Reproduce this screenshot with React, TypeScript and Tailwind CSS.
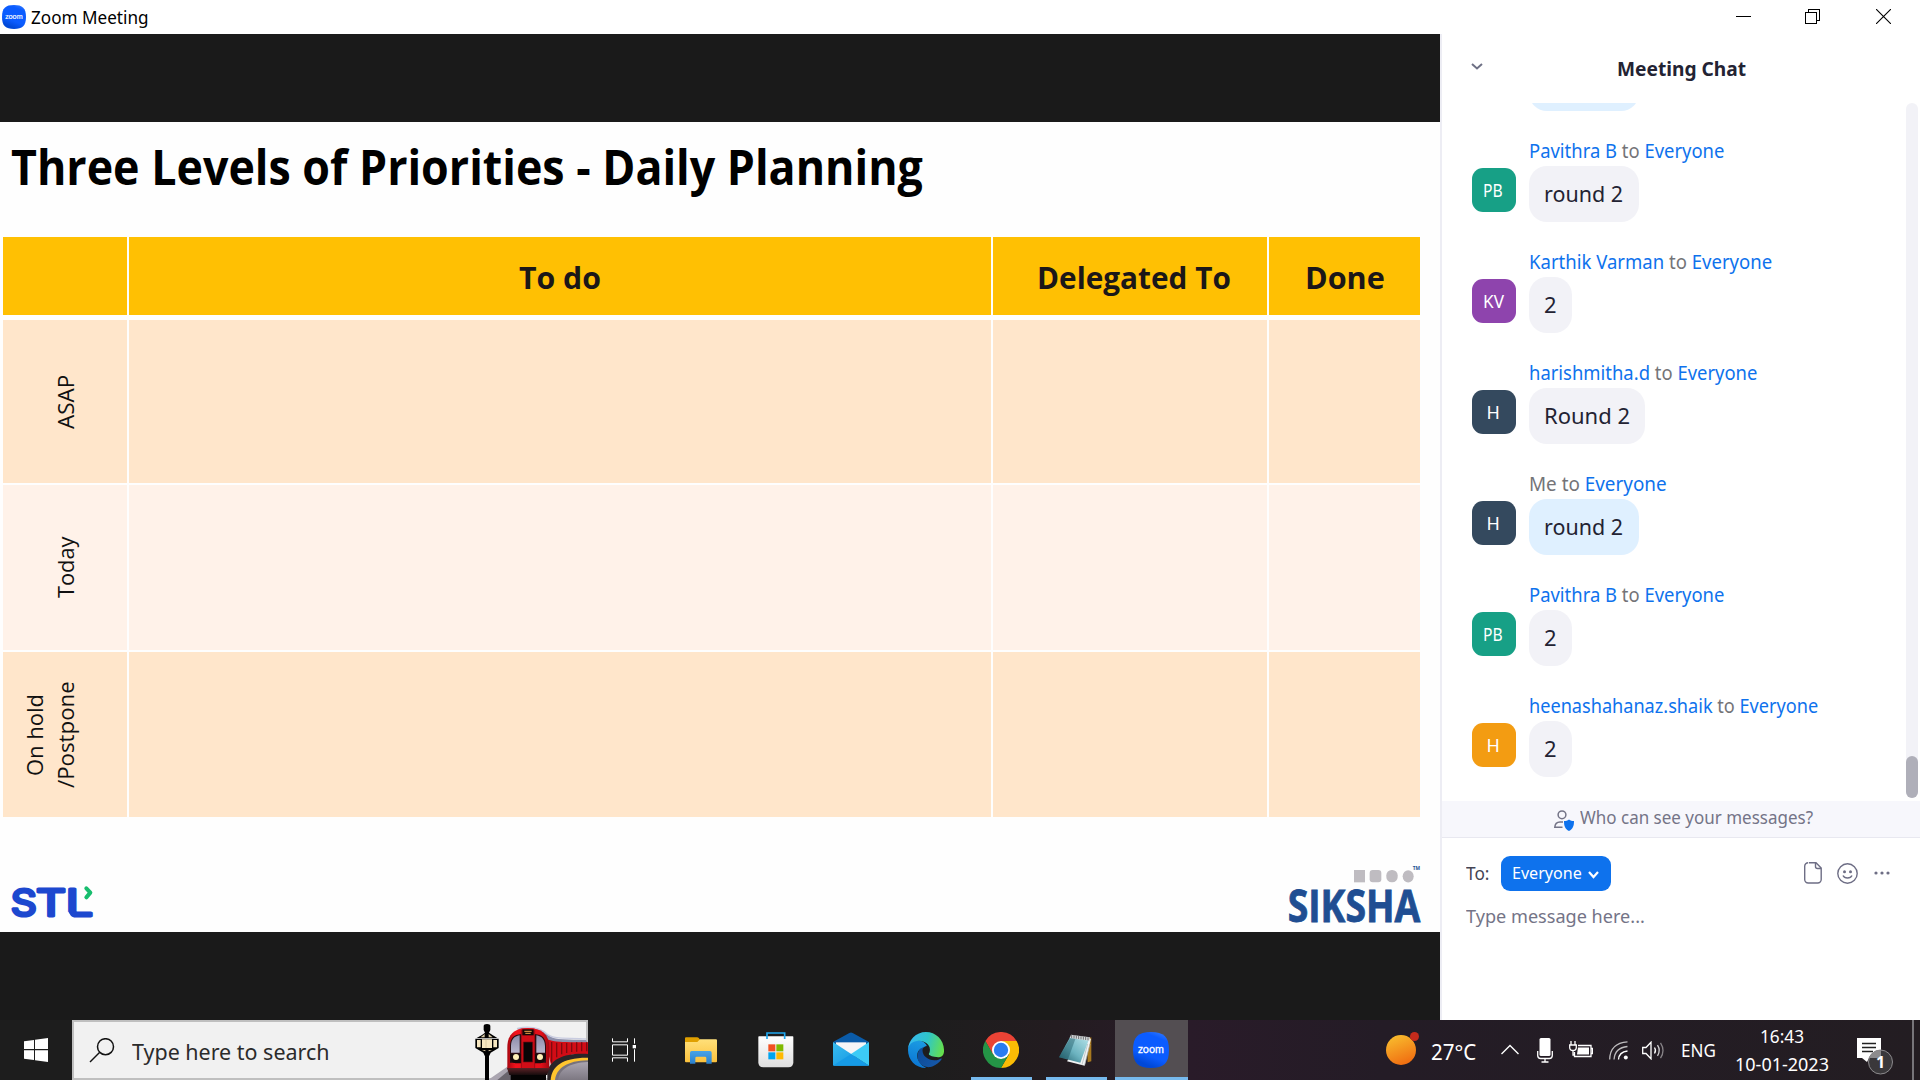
import React, { useLayoutEffect, useRef, useState } from "react";

/* Text stretched or squeezed to fill the width (or height) of its box. */
function Fit({ className = "", vertical = false, children }: { className?: string; vertical?: boolean; children: React.ReactNode }) {
  const outer = useRef<HTMLSpanElement>(null);
  const inner = useRef<HTMLSpanElement>(null);
  const [scale, setScale] = useState(1);
  useLayoutEffect(() => {
    const o = outer.current;
    const i = inner.current;
    if (!o || !i) return;
    setScale(vertical ? o.clientHeight / i.offsetHeight : o.clientWidth / i.offsetWidth);
  }, [vertical]);
  return (
    <span ref={outer} className={`block shrink-0 whitespace-nowrap ${vertical ? "rotate-180 [writing-mode:vertical-rl]" : ""} ${className}`}>
      <span
        ref={inner}
        className="inline-block origin-top-left"
        style={{ transform: vertical ? `scaleY(${scale})` : `scaleX(${scale})` }}
      >
        {children}
      </span>
    </span>
  );
}

const UI = "font-['Noto_Sans','Open_Sans',sans-serif]";
const SLIDE = "font-['Open_Sans','Noto_Sans',sans-serif]";

function ZoomLogo({ className }: { className: string }) {
  return (
    <svg viewBox="0 0 108 108" className={className}>
      <defs>
        <linearGradient id="zoomBlue" x1="1" y1="0" x2="0.6" y2="1">
          <stop offset="0" stopColor="#3f83ff" />
          <stop offset="0.25" stopColor="#0b5cff" />
          <stop offset="0.75" stopColor="#0b5cff" />
          <stop offset="1" stopColor="#0048d8" />
        </linearGradient>
      </defs>
      <path d="M54 0C92 0 108 14 108 54S92 108 54 108 0 94 0 54 16 0 54 0Z" fill="url(#zoomBlue)" />
      <text x="15" y="63" fontSize="36" fontFamily="Lato, sans-serif" fontWeight="400" stroke="#fff" strokeWidth=".8" fill="#fff" textLength="78" lengthAdjust="spacingAndGlyphs">zoom</text>
    </svg>
  );
}

function TitleBar() {
  return (
    <header className="flex h-[34px] items-center bg-white pl-0.5">
      <ZoomLogo className="size-6" />
      <Fit className="ml-[5px] w-[118px] text-[18px] leading-[34px] text-black">Zoom Meeting</Fit>
      <div className="ml-auto flex items-center pr-[29px] pb-[2px]">
        <svg className="h-4 w-[15px]" viewBox="0 0 15 16" shapeRendering="crispEdges"><path d="M0 8.500H15" stroke="#000" /></svg>
        <svg className="ml-[54px] size-[15px]" viewBox="0 0 15 15" fill="none" stroke="#000" shapeRendering="crispEdges">
          <path d="M.5 3.500h11v11h-11zM3.500 3.500V.5h11v11h-3" />
        </svg>
        <svg className="ml-[56px] size-[15px]" viewBox="0 0 15 15" stroke="#000" strokeWidth="1.1"><path d="M0 0 15 15M15 0 0 15" /></svg>
      </div>
    </header>
  );
}

const rows = [
  { label: ["ASAP"], heights: ["h-[54px]"], bg: "bg-[#ffe6cb]" },
  { label: ["Today"], heights: ["h-[61px]"], bg: "bg-[#fff2e9]" },
  { label: ["On hold", "/Postpone"], heights: ["h-[82px]", "h-[107px]"], bg: "bg-[#ffe6cb]" },
];

function PriorityTable() {
  return (
    <div className="ml-[3px] grid w-[1417px] grid-cols-[124px_862px_274px_151px] grid-rows-[79px_165px_165px_165px] gap-x-[2px] gap-y-[2px] text-[22.500px] text-[#111]">
      {["", "To do", "Delegated To", "Done"].map((h, i) => (
        <div key={i} className={`mb-px flex items-center justify-center bg-[#ffc003] pt-0.5 text-[31px] leading-none font-bold text-[#1b1718] ${i === 2 ? "pl-[7px]" : ""}`}>
          {h && <Fit className={["", "w-[82px]", "w-[194px]", "w-[80px]"][i]}>{h}</Fit>}
        </div>
      ))}
      {rows.map((r, n) => (
        <React.Fragment key={n}>
          <div className={`${r.bg} ${n === 0 ? "mt-[2px]" : ""} flex items-center justify-end pr-[46px]`}>
            {r.label.map((l, i) => (
              <Fit key={l} vertical className={`w-[31px] leading-[31px] ${r.heights[i]}`}>{l}</Fit>
            ))}
          </div>
          {[0, 1, 2].map((c) => (
            <div key={c} className={`${r.bg} ${n === 0 ? "mt-[2px]" : ""}`} />
          ))}
        </React.Fragment>
      ))}
    </div>
  );
}

function SlideLogos() {
  return (
    <div className="mt-auto flex h-[78px] items-start justify-between pr-[15px] pl-[9px]">
      <svg className="mt-[28px] h-[42px] w-[87px] overflow-visible" viewBox="27 100 261 126">
        <g fontFamily="Inter, sans-serif" fontWeight="400" fontSize="111" fill="#1d48cf" stroke="#1d48cf" strokeWidth="9" strokeLinejoin="round">
          <text x="32" y="203" textLength="78" lengthAdjust="spacingAndGlyphs">S</text>
          <text x="108" y="203" textLength="90" lengthAdjust="spacingAndGlyphs">T</text>
          <text x="197" y="203" textLength="82" lengthAdjust="spacingAndGlyphs">L</text>
        </g>
        <path d="M259 119 271 132 259 146" fill="none" stroke="#18bd6e" strokeWidth="12" strokeLinecap="round" strokeLinejoin="round" />
        <path d="M203 190V210H222Q209 204 203 190Z" fill="#fefefe" stroke="#fefefe" strokeWidth="4" />
        <path d="M219 176Q223 190 239 193H222Z" fill="#1d48cf" />
      </svg>
      <svg className="mt-[7px] h-[66px] w-[140px] overflow-visible" viewBox="136 37 420 198">
        <g fill="#bfbcc1">
          <rect x="343" y="64" width="33" height="37" />
          <rect x="390" y="64" width="35" height="37" rx="9" />
          <rect x="440" y="64" width="34" height="37" rx="16" />
          <ellipse cx="505.500" cy="83" rx="16.500" ry="18.500" />
        </g>
        <text x="519" y="65" fontSize="16" fontFamily="Open Sans, sans-serif" fontWeight="700" fill="#244f91" textLength="22" lengthAdjust="spacingAndGlyphs">TM</text>
        <text x="144" y="219" fontSize="132" fontFamily="Open Sans, sans-serif" fontWeight="700" fill="#204e92" stroke="#204e92" strokeWidth="2.500" textLength="398" lengthAdjust="spacingAndGlyphs">SIKSHA</text>
      </svg>
    </div>
  );
}

function SharedScreen() {
  return (
    <main className="flex w-[1440px] flex-col bg-[#1a1a1a] pt-[88px] pb-[88px]">
      <section className={`flex h-[810px] flex-col bg-[#fefefe] ${SLIDE}`}>
        <h1 className="flex h-[115px] pl-[11px] text-[48px] leading-[90px] font-bold text-black">
          <Fit className="w-[912px]">Three Levels of Priorities - Daily Planning</Fit>
        </h1>
        <PriorityTable />
        <SlideLogos />
      </section>
    </main>
  );
}

type Message = { from: string; w: string; initials: string; iw: string; avatar: string; text: string; tw: string; bw: string; mine?: boolean };
const messages: Message[] = [
  { from: "Pavithra B", w: "w-[195px]", initials: "PB", iw: "w-[20px]", avatar: "bg-[#17a086]", text: "round 2", tw: "w-[79px]", bw: "w-[110px]" },
  { from: "Karthik Varman", w: "w-[243px]", initials: "KV", iw: "w-[21px]", avatar: "bg-[#8e44ad]", text: "2", tw: "w-[13px]", bw: "w-[43px]" },
  { from: "harishmitha.d", w: "w-[228px]", initials: "H", iw: "w-[13px]", avatar: "bg-[#34495e]", text: "Round 2", tw: "w-[86px]", bw: "w-[116px]" },
  { from: "Me", w: "w-[138px]", initials: "H", iw: "w-[13px]", avatar: "bg-[#34495e]", text: "round 2", tw: "w-[79px]", bw: "w-[110px]", mine: true },
  { from: "Pavithra B", w: "w-[195px]", initials: "PB", iw: "w-[20px]", avatar: "bg-[#17a086]", text: "2", tw: "w-[13px]", bw: "w-[43px]" },
  { from: "heenashahanaz.shaik", w: "w-[289px]", initials: "H", iw: "w-[13px]", avatar: "bg-[#f39c12]", text: "2", tw: "w-[13px]", bw: "w-[43px]" },
];

function ChatMessage({ m }: { m: Message }) {
  return (
    <li className="flex h-[111px]">
      <div className={`mt-[31.500px] flex size-[44px] items-center justify-center rounded-[11px] pr-[2px] text-[18px] leading-none text-white ${m.avatar}`}>
        <Fit className={m.iw}>{m.initials}</Fit>
      </div>
      <div className="ml-[13px]">
        <div className="h-[30px] text-[19px] leading-[30px] text-[#747478]">
          <Fit className={m.w}>
            <span className={m.mine ? "" : "text-[#0e72ed]"}>{m.from}</span> to <span className="text-[#0e72ed]">Everyone</span>
          </Fit>
        </div>
        <div className={`flex h-[56px] items-center rounded-[18px] pb-[2px] pl-[15px] text-[22px] leading-none text-[#232333] ${m.bw} ${m.mine ? "bg-[#dff0ff]" : "bg-[#f2f2f7]"}`}>
          <Fit className={m.tw}>{m.text}</Fit>
        </div>
      </div>
    </li>
  );
}

function ChatPanel() {
  return (
    <aside className="flex flex-1 flex-col border-l-2 border-[#ededf4] bg-white">
      <div className="flex h-[69px] items-center pl-[29px]">
        <svg className="-mt-[3px] h-[8px] w-[12px]" viewBox="0 0 12 8" fill="none" stroke="#6e7085" strokeWidth="2"><path d="M1 1 6 5.500 11 1" /></svg>
        <Fit className="mt-[2px] ml-[134px] w-[129px] text-[19px] leading-none font-bold text-[#232333]">Meeting Chat</Fit>
      </div>
      <div className="flex h-[698px] pr-[2px] pb-[3px]">
        <div className="flex-1 overflow-hidden pl-[30px]">
          <div className="mb-[25px] ml-[57px] h-[8px] w-[110px] overflow-hidden">
            <div className="-mt-[48px] h-[56px] rounded-[18px] bg-[#dff0ff]" />
          </div>
          <ul>{messages.map((m, i) => <ChatMessage key={i} m={m} />)}</ul>
        </div>
        <div className="flex w-[12px] items-end rounded-full bg-[#f2f2f7]"><div className="h-[42px] w-full rounded-full bg-[#afafb9]" /></div>
      </div>
      <div className="flex h-[37px] items-center border-b border-[#e8e8f0] bg-[#f7f7fc] pl-[112px]">
        <svg className="mt-[2px] size-[21px]" viewBox="0 0 21 21" fill="none" stroke="#747487" strokeWidth="1.500">
          <circle cx="8" cy="4.800" r="3.900" />
          <path d="M9 12H6C3 12 1 14 .8 17.300H8.500" />
          <path d="M15 9.500c1.500 1.200 3 1.600 5 1.600 0 5-1 8-5 9.900-4-1.900-5-4.900-5-9.900 2 0 3.500-.4 5-1.600Z" fill="#0e72ed" stroke="none" />
        </svg>
        <Fit className="mb-[2px] ml-[5px] w-[233px] text-[17.500px] leading-none text-[#747487]">Who can see your messages?</Fit>
      </div>
      <div className="mt-[17px] flex h-[36px] items-center pl-[24px]">
        <Fit className="w-[23px] text-[18px] leading-none text-[#444453]">To:</Fit>
        <button className="ml-[12px] flex h-[35px] w-[110px] items-center rounded-[9px] bg-[#0e72ed] pl-[11px] text-white">
          <Fit className="-mt-px w-[70px] text-[17px] leading-none">Everyone</Fit>
          <svg className="mt-[4px] ml-[6px] h-[8px] w-[11px]" viewBox="0 0 11 8" fill="none" stroke="#fff" strokeWidth="2.200"><path d="M1 1 5.500 6 10 1" /></svg>
        </button>
        <svg className="ml-[193px] h-[22px] w-[18px]" viewBox="0 0 18 22" fill="none" stroke="#6e6e85" strokeWidth="1.400">
          <path d="M5 .8h7L17.200 6v11.500a3.500 3.500 0 0 1-3.500 3.500H4.200A3.500 3.500 0 0 1 .7 17.500V4.300A3.500 3.500 0 0 1 4.200.8M11.500 1v3.500a2 2 0 0 0 2 2h3.500" />
        </svg>
        <svg className="ml-[15px] size-[21px]" viewBox="0 0 21 21" fill="none" stroke="#6e6e85" strokeWidth="1.400">
          <circle cx="10.500" cy="10.500" r="9.700" />
          <path d="M6 12.500c1.500 3.400 7.500 3.400 9 0" />
          <g fill="#6e6e85" stroke="none"><circle cx="7.500" cy="8.700" r="1.500" /><circle cx="13.500" cy="8.700" r="1.500" /></g>
        </svg>
        <svg className="ml-[16px] h-[4px] w-[16px]" viewBox="0 0 16 4" fill="#6e6e85"><circle cx="2" cy="2" r="1.600" /><circle cx="8" cy="2" r="1.600" /><circle cx="14" cy="2" r="1.600" /></svg>
      </div>
      <Fit className="mt-[13px] ml-[24px] w-[179px] text-[18.500px] leading-[24px] text-[#747487]">Type message here...</Fit>
    </aside>
  );
}

/* Street lamp and red train at the right end of the search box. */
function SearchArt() {
  return (
    <svg className="h-[58px] w-[115px]" viewBox="39 36 345 174" preserveAspectRatio="none">
      <defs>
        <linearGradient id="trainFront" x1="0" x2="1"><stop offset="0" stopColor="#a80710" /><stop offset=".2" stopColor="#f2121c" /><stop offset=".8" stopColor="#e30f19" /><stop offset="1" stopColor="#a00810" /></linearGradient>
        <linearGradient id="trainGlass" x1="0" y1="0" x2="0" y2="1"><stop offset="0" stopColor="#8b8aa8" /><stop offset="1" stopColor="#b9b7cd" /></linearGradient>
        <linearGradient id="platform" x1="0" y1="0" x2="0" y2="1"><stop offset="0" stopColor="#aaa5b0" /><stop offset="1" stopColor="#7d7882" /></linearGradient>
        <linearGradient id="trainUnder" x1="0" y1="0" x2="0" y2="1"><stop offset="0" stopColor="#5c2226" /><stop offset="1" stopColor="#160c0d" /></linearGradient>
      </defs>
      <path d="M84 210 145 168 160 210Z" fill="#aaa5b0" /><path d="M112 210 148 180 158 210Z" fill="#69646d" />
      <path d="M170 56c40-10 70-2 95 20 20 16 60 12 113 14l6 12H262Z" fill="#8d90ac" />
      <path d="M172 55c40-8 68-2 90 18 20 16 60 10 116 14" fill="none" stroke="#c9cce0" strokeWidth="4" />
      <path d="M255 85c30 16 70 10 129 12v36c-60-4-80 10-110 38Z" fill="#d20c16" />
      <path d="M275 96v62M290 98v44M305 99v34M320 99v30M335 98v28M350 97v28M365 97v27M380 97v27" stroke="#7c0a10" strokeWidth="4" />
      <path d="M262 180C278 148 310 128 384 132V210H262Z" fill="#2b2528" />
      <path d="M272 210c2-40 35-68 112-67V210Z" fill="#ffc52e" />
      <path d="M285 210c4-34 35-58 99-59V210Z" fill="#77727c" />
      <path d="M294 210c4-30 32-52 90-54V210Z" fill="url(#platform)" />
      <path d="M142 178V112C142 72 165 54 204 54S268 72 268 112V178Z" fill="url(#trainFront)" />
      <path d="M150 158V108C151 85 160 74 184 72V158ZM258 158V108C257 85 248 74 224 72V158Z" fill="#2a0d12" />
      <path d="M153 128V108C154 88 162 79 179 76V128ZM255 128V108C254 88 246 79 229 76V128Z" fill="url(#trainGlass)" />
      <path d="M150 132H184V160H166Q150 158 150 132ZM224 132H258Q258 158 242 160H224Z" fill="#160a0b" />
      <path d="M184 56H224V176H184Z" fill="#d10d17" /><path d="M184 60V175M224 60V175" stroke="#8a0910" strokeWidth="2" />
      <path d="M187 58H221V76H187Z" fill="#130808" /><path d="M193 64H215M196 70H212" stroke="#f2a34a" strokeWidth="3" />
      <path d="M190 96H218V156H190Z" fill="#080506" stroke="#790a10" strokeWidth="2" />
      <circle cx="168" cy="141" r="9" fill="#fff1b8" /><circle cx="240" cy="141" r="9" fill="#fff1b8" />
      <path d="M141 174H268L262 195H148Z" fill="url(#trainUnder)" /><path d="M152 195H258V210H152Z" fill="#050404" />
      <path d="M75 115H87V210H75Z" fill="#000" />
      <path d="M71 48Q71 42 81 42T91 48V60L87 68Q96 74 112 84H50Q66 76 75 68L71 60Z" fill="#000" />
      <path d="M46 86H116V114L92 128 88 137H74L70 128 46 114Z" fill="#000" />
      <path d="M51 90H62V112H51ZM66 88H96V114H66ZM100 90H111V112H100Z" fill="#f7e7c1" />
      <path d="M62 82 74 72V82ZM86 72 98 82H86ZM66 120H76V124ZM86 120H96L86 124Z" fill="#d9c9a4" />
      <path d="M78 88V114" stroke="#cdbd99" strokeWidth="2" />
    </svg>
  );
}

function TaskViewIcon() {
  return (
    <svg className="h-[24px] w-[26px]" viewBox="453 83 78 72" fill="none" stroke="#fff" strokeWidth="3">
      <path d="M457.500 84v10.500h45V84M457.500 154v-11.500h45V154M457.500 103.500h45v31h-45zM523.500 84v16M523.500 117v37" />
      <path d="M518 104h10v10h-10z" fill="#fff" stroke="none" />
    </svg>
  );
}

function ExplorerIcon() {
  return (
    <svg className="h-[27px] w-[32px]" viewBox="675 80 96 81">
      <defs>
        <linearGradient id="folder" x1="0" y1="0" x2="0" y2="1"><stop offset="0" stopColor="#ffe07a" /><stop offset="1" stopColor="#fbc13c" /></linearGradient>
        <linearGradient id="folderBlue" x1="0" y1="0" x2="0" y2="1"><stop offset="0" stopColor="#48a3e8" /><stop offset="1" stopColor="#2b80cc" /></linearGradient>
      </defs>
      <path d="M675 84q0-3 3-3h33q4 0 6 3l3 4v12h-45Z" fill="#e0a000" />
      <path d="M675 95h37l8-8h48q3 0 3 3v63q0 3-3 3h-90q-3 0-3-3Z" fill="url(#folder)" />
      <path d="M690 160v-33q0-5 5-5h55q5 0 5 5v33h-16v-17q0-4-4-4h-25q-4 0-4 4v17Z" fill="url(#folderBlue)" />
    </svg>
  );
}

function StoreIcon() {
  return (
    <svg className="h-[36px] w-[36px]" viewBox="893 68 108 108">
      <defs><linearGradient id="bag" x1="0" y1="0" x2="0" y2="1"><stop offset="0" stopColor="#fff" /><stop offset="1" stopColor="#dedede" /></linearGradient></defs>
      <path d="M894 83q0-2 2-2h101q2 0 2 2v76q0 15-15 15h-75q-15 0-15-15Z" fill="url(#bag)" />
      <path d="M920 89V71h53v18" fill="none" stroke="#1fa8f0" strokeWidth="5" />
      <path d="M924 105h21v21h-21z" fill="#f25022" /><path d="M948 105h21v21h-21z" fill="#7fba00" />
      <path d="M924 129h21v21h-21z" fill="#00a4ef" /><path d="M948 129h21v21h-21z" fill="#ffb900" />
    </svg>
  );
}

function MailIcon() {
  return (
    <svg className="h-[34px] w-[36px]" viewBox="1119 67 108 102">
      <defs><linearGradient id="mailBody" x1="0" y1="0" x2="1" y2="1"><stop offset="0" stopColor="#38bdf0" /><stop offset="1" stopColor="#1090e0" /></linearGradient></defs>
      <path d="M1119 97 1168 70q5-3 10 0l49 27-54 36Z" fill="#0a5ba8" />
      <path d="M1128 98h90v40h-90Z" fill="#f5f5f7" />
      <path d="M1119 97 1227 168H1122q-3 0-3-3Z" fill="url(#mailBody)" />
      <path d="M1227 97 1173 133 1227 168Z" fill="#3ccbf6" />
      <path d="M1119 168 1173 133 1227 168Z" fill="#169be6" />
    </svg>
  );
}

function EdgeIcon() {
  return (
    <svg className="h-[36px] w-[36px]" viewBox="0 0 256 256">
      <defs>
        <linearGradient id="edgeTop" x1="0" y1=".4" x2="1" y2=".6"><stop offset="0" stopColor="#36b8f0" /><stop offset=".5" stopColor="#2fc6c8" /><stop offset="1" stopColor="#66e04c" /></linearGradient>
        <linearGradient id="edgeLeft" x1=".6" y1="0" x2=".4" y2="1"><stop offset="0" stopColor="#1b9be2" /><stop offset="1" stopColor="#0a74d2" /></linearGradient>
        <linearGradient id="edgeLow" x1="0" y1="0" x2="1" y2=".5"><stop offset="0" stopColor="#0c4a96" /><stop offset="1" stopColor="#1557a8" /></linearGradient>
      </defs>
      <path d="M231 190c-3 2-7 3-10 5-11 4-22 6-34 6-45 0-84-31-84-71 0-11 6-21 16-26-40 2-51 44-51 69 0 70 65 77 78 77 8 0 19-2 26-4l1-1c29-10 53-29 68-54 1-1-7-4-10-1Z" fill="url(#edgeLow)" />
      <path d="M106 241c-8-5-15-12-21-19-33-45-23-97 20-112 4-3 10-5 14-6 3-1 8-4 15-4-8-26-45-44-74-40C30 62 0 83 0 128c0 70 52 128 128 128 8 0-12-8-22-15Z" fill="url(#edgeLeft)" />
      <path d="M152 149c-1 1-4 3-4 7 0 3 2 7 7 10 22 15 64 13 64 13 42 0 37-48 37-52C255 54 196 0 128 0 57 0 1 57 0 127c1-36 36-64 78-64 40 0 78 25 78 62 0 13-3 23-4 24Z" fill="url(#edgeTop)" />
    </svg>
  );
}

function ChromeIcon() {
  return (
    <svg className="h-[36px] w-[36px]" viewBox="-54 -54 108 108">
      <path d="M-46.800-27A54 54 0 0 1 46.800-27L0-20-24 14Z" fill="#ea4335" />
      <path d="M46.800-27A54 54 0 0 1 0 54L23.400 13.500 0-27Z" fill="#fbbc05" />
      <path d="M0 54A54 54 0 0 1-46.800-27L-23.400 13.500 6 26 23.400 13.500Z" fill="#249446" />
      <circle r="27" fill="#fff" /><circle r="21.500" fill="#2a7bf0" />
    </svg>
  );
}

function NotepadIcon() {
  return (
    <svg className="h-[32px] w-[33px]" viewBox="476 70 99 96">
      <defs><linearGradient id="pad" x1="1" y1="0" x2="0" y2="1"><stop offset="0" stopColor="#b7e3ea" /><stop offset=".55" stopColor="#6cb3c0" /><stop offset="1" stopColor="#1f5c69" /></linearGradient></defs>
      <path d="M560 84 573 80V152L562 155Z" fill="#a8791f" />
      <path d="M545 84 572 84 553 165 500 152Z" fill="#f1f3f4" />
      <path d="M569 100 553 163M562 100 545 162" stroke="#a9b4b8" strokeWidth="2" />
      <path d="M510 78 566 86 540 156 476 140Z" fill="url(#pad)" />
      <path d="M512 78 527 80 503 146 476 140Z" fill="#174d59" opacity=".4" />
      <path d="M512 72 569 80 567 90 508 82Z" fill="#d9dcde" />
      <path d="M514 73v9M521 74v9M528 75v9M535 76v9M542 77v9M549 78v9M556 79v9M563 80v9" stroke="#55595b" strokeWidth="2.500" />
    </svg>
  );
}

const apps = [
  { icon: <TaskViewIcon />, bar: "", pad: "pr-[4px] pb-[1px]" },
  { icon: <ExplorerIcon />, bar: "", pad: "pb-0" },
  { icon: <StoreIcon />, bar: "", pad: "pb-0" },
  { icon: <MailIcon />, bar: "", pad: "pb-[2px]" },
  { icon: <EdgeIcon />, bar: "", pad: "pb-0" },
  { icon: <ChromeIcon />, bar: "w-[61px] ml-px", pad: "pl-px" },
  { icon: <NotepadIcon />, bar: "w-[61px] ml-[2px]", pad: "pb-px" },
];

function Tray() {
  return (
    <div className="ml-auto flex h-full items-center text-white">
      <svg className="-mt-[3px] h-[33px] w-[34px]" viewBox="0 0 34 33">
        <defs><linearGradient id="sun" x1=".3" y1="0" x2=".7" y2="1"><stop offset="0" stopColor="#f8bb2d" /><stop offset="1" stopColor="#f06a10" /></linearGradient></defs>
        <circle cx="15" cy="18" r="15" fill="url(#sun)" /><circle cx="28.500" cy="4.500" r="4.500" fill="#c42b1c" />
      </svg>
      <Fit className="mt-[4px] ml-[11px] w-[45px] text-[21px] leading-none">27°C</Fit>
      <svg className="-mt-[2px] ml-[25px] h-[11px] w-[18px]" viewBox="0 0 18 11" fill="none" stroke="#fff" strokeWidth="1.400"><path d="M.5 10 9 1.500 17.500 10" /></svg>
      <svg className="ml-[18px] h-[25px] w-[16px]" viewBox="0 0 16 25" fill="none" stroke="#fff" strokeWidth="1.300">
        <rect x="2.500" y="0" width="11" height="18" rx="1.500" fill="#fff" stroke="none" /><path d="M.7 13v4.500q0 3 3 3h8.600q3 0 3-3V13M8 20.500V24M4.500 24h7" />
      </svg>
      <svg className="-mt-[2px] ml-[16px] h-[17px] w-[24px]" viewBox="0 0 24 17" fill="none" stroke="#fff" strokeWidth="1.300">
        <path d="M2 0v4M6 0v4M.7 4h6.600v2.500q0 3-3.300 3t-3.300-3ZM4 9.500V14H6M9 4.500H22v11H5.500V11M22.500 7.500h1v5h-1" /><path d="M9 6.500H20v7H8Z" fill="#fff" stroke="none" />
      </svg>
      <svg className="ml-[16px] h-[19px] w-[19px]" viewBox="0 0 19 19" fill="none" stroke="#fff" strokeWidth="1.300">
        <g opacity=".7"><path d="M.7 18.500Q1 2 18.500.8" /><path d="M5 18.500Q6 6.500 18.500 5.500" /></g><path d="M9.500 18.500Q10 11 18.500 10" /><circle cx="16.800" cy="16.600" r="2" fill="#fff" stroke="none" />
      </svg>
      <svg className="ml-[14px] h-[19px] w-[23px]" viewBox="0 0 23 19" fill="none" stroke="#fff" strokeWidth="1.300">
        <path d="M.7 6.500H4L9 1.200V17.800L4 12.500H.7Z" /><path d="M12.500 6.500q2 3 0 6" /><path d="M15.500 4.200q3.500 5.300 0 10.600" opacity=".8" /><path d="M18.500 1.800q5 7.700 0 15.400" opacity=".45" />
      </svg>
      <Fit className="ml-[16px] w-[35px] text-[18px] leading-none">ENG</Fit>
      <div className="ml-[18px] flex w-[96px] flex-col items-center text-[18px] leading-[28px]">
        <Fit className="w-[44px]">16:43</Fit>
        <Fit className="w-[94px]">10-01-2023</Fit>
      </div>
      <svg className="mt-[12px] ml-[26px] h-[38px] w-[38px]" viewBox="0 0 38 38">
        <path d="M1 1H25V21H13L11 25 6 21H1Z" fill="#fff" /><path d="M6 6.500H20M6 10.500H20M6 14.500H17" stroke="#222" strokeWidth="1.300" />
        <circle cx="24.500" cy="25" r="12" fill="#3a383b" stroke="#8c8a8d" />
        <path d="M13 21A12 12 0 0 1 25 13V21Z" fill="#8c8b8d" />
        <text x="24.500" y="30.500" textAnchor="middle" fontSize="16" fontWeight="700" fontFamily="Noto Sans, sans-serif" fill="#fff">1</text>
      </svg>
      <div className="mr-[6px] ml-[18px] h-full w-[2px] bg-[#77757a]" />
    </div>
  );
}

function Taskbar() {
  return (
    <footer className="flex h-[60px] bg-[linear-gradient(90deg,#1d1d1d_0%,#1d1d1d_48%,#231c20_55%,#291b29_62%,#241c26_72%,#231d22_100%)]">
      <div className="flex w-[72px] items-center pl-[24px]">
        <svg className="size-[24px]" viewBox="0 0 72 72" fill="#fff"><path d="M0 10 30 6V33H0ZM33 5.500 72 0V33H33ZM0 37H30V66L0 62ZM33 37H72V72L33 67Z" /></svg>
      </div>
      <div className="flex w-[516px] border-2 border-[#bfbfbf] bg-[#f1f1f1]">
        <svg className="mt-[16px] ml-[15px] size-[26px]" viewBox="0 0 26 26" fill="none" stroke="#111" strokeWidth="1.500"><circle cx="16.500" cy="8.700" r="8" /><path d="M10.500 14.500 1 24" /></svg>
        <Fit className="ml-[17px] w-[198px] text-[22px] leading-[59px] text-[#2b2b2b]">Type here to search</Fit>
        <div className="-mr-[2px] -mb-[2px] ml-auto"><SearchArt /></div>
      </div>
      {apps.map((a, i) => (
        <div key={i} className="grid w-[75px] grid-rows-[57px_3px] justify-items-center">
          <div className={`mt-[3px] flex items-center ${a.pad}`}>{a.icon}</div>
          {a.bar && <div className={`bg-[#76b9ed] ${a.bar}`} />}
        </div>
      ))}
      <div className="ml-[2px] flex w-[73px] flex-col items-center border-b-[3px] border-[#76b9ed] bg-[#534e52] pt-[12px] pr-px"><ZoomLogo className="size-[36px]" /></div>
      <Tray />
    </footer>
  );
}

export default function App() {
  return (
    <div className={`flex h-[1080px] w-[1920px] flex-col overflow-hidden bg-white ${UI}`}>
      <TitleBar />
      <div className="flex h-[986px]">
        <SharedScreen />
        <ChatPanel />
      </div>
      <Taskbar />
    </div>
  );
}
